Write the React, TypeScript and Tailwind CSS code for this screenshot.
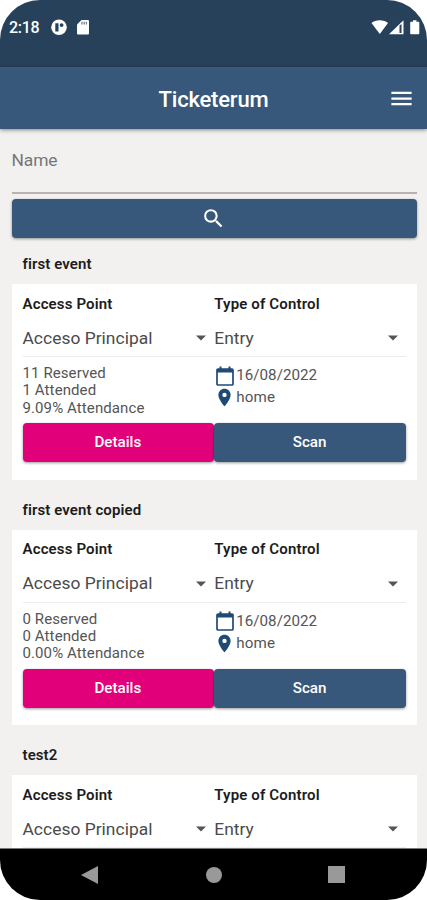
import type { ReactNode } from "react";
import { MdMenu, MdSearch, MdLocationOn } from "react-icons/md";

type EventDetails = {
  reserved: number;
  attended: number;
  attendance: string;
  date: string;
  place: string;
};

type EventItem = {
  name: string;
  details?: EventDetails;
};

const events: EventItem[] = [
  {
    name: "first event",
    details: { reserved: 11, attended: 1, attendance: "9.09", date: "16/08/2022", place: "home" },
  },
  {
    name: "first event copied",
    details: { reserved: 0, attended: 0, attendance: "0.00", date: "16/08/2022", place: "home" },
  },
  { name: "test2" },
];

const StatusBar = () => (
  <div className="flex h-[67px] shrink-0 items-start bg-[#28415a] pt-[17px] pr-[7px] pl-[9px] text-white">
    <span className="text-[16px] leading-[22px] font-medium tracking-[-0.3px]">2:18</span>
    <svg className="mt-[2px] ml-[12px]" width="16" height="17" viewBox="0 0 16 17">
      <circle cx="8" cy="8.300" r="7.800" fill="#fff" />
      <path d="M4.300 4.200h3.200v8.300H4.300z" fill="#28415a" />
      <circle cx="10.600" cy="6.100" r="1.900" fill="#28415a" />
    </svg>
    <svg className="mt-[3px] ml-[10px]" width="12" height="15" viewBox="0 0 12 15">
      <path d="M4.500 0H11a1 1 0 0 1 1 1V13.500a1 1 0 0 1-1 1H1a1 1 0 0 1-1-1V4.500z" fill="#fff" />
      <path d="M5 1.800v2.600M7.200 1.800v2.600M9.400 1.800v2.600" stroke="#6f8191" strokeWidth="1.300" />
    </svg>
    <svg className="mt-[2px] ml-auto" width="50" height="17" viewBox="0 0 50 17">
      <path d="M1.500 4C5.500.2 14 .2 18 4L9.800 15z" fill="#fff" />
      <path d="M19 15.300L33.500 1.200v14.100z" fill="#fff" />
      <path d="M29.500 6.500v7.500h2V5z" fill="#28415a" />
      <path d="M41 2.800h2V1.200h3.500v1.600h2q.8 0 .8.800v10.900q0 .8-.8.800H41q-.8 0-.8-.8V3.600q0-.8.8-.8z" fill="#fff" />
    </svg>
  </div>
);

const Header = () => (
  <header className="flex h-[62px] shrink-0 items-center bg-[#37587b] px-[12px] text-white shadow-[0_1px_4px_rgba(0,0,0,0.45)]">
    <div className="w-[27px]" />
    <h1 className="flex-1 pt-[2px] text-center text-[22px] font-medium tracking-[-0.2px]">Ticketerum</h1>
    <MdMenu className="mt-px size-[27px]" />
  </header>
);

const Select = ({ label, value }: { label: string; value: string }) => (
  <div className="flex-1">
    <div className="h-[37px] pt-[9.500px] text-[15px] leading-[20px] font-semibold tracking-[0.15px] text-[#1c1c1c]">
      {label}
    </div>
    <div className="flex h-[36px] items-center justify-between border-b border-[#ececec] pr-[8px] pb-px">
      <span className="text-[17.4px] tracking-[0.030px] text-[#4a4a4a]">{value}</span>
      <svg width="10" height="6" viewBox="0 0 10 6">
        <path d="M0 .5h10L5 5.500z" fill="#555" />
      </svg>
    </div>
  </div>
);

const Button = ({ className, children }: { className: string; children: ReactNode }) => (
  <button
    className={`flex h-[39px] flex-1 items-center justify-center rounded-[4px] pr-px text-[15.2px] font-medium text-white shadow-[0_1px_3px_rgba(0,0,0,0.4)] ${className}`}
  >
    {children}
  </button>
);

const Details = ({ details }: { details: EventDetails }) => (
  <>
    <div className="flex h-[66px] text-[15px] tracking-[0.1px] text-[#555]">
      <div className="flex-1 pt-[8px] leading-[17.400px]">
        <div>{details.reserved} Reserved</div>
        <div>{details.attended} Attended</div>
        <div>{details.attendance}% Attendance</div>
      </div>
      <div className="flex-1 pt-[7.500px] text-[15.200px]">
        <div className="flex h-[22px] items-center gap-[2px] pl-[2px]">
          <svg width="18" height="20" viewBox="0 0 18 20">
            <path d="M2 3h14a1 1 0 0 1 1 1v14a1 1 0 0 1-1 1H2a1 1 0 0 1-1-1V4a1 1 0 0 1 1-1z" fill="none" stroke="#1f4a75" strokeWidth="1.700" />
            <path d="M1 3h16v3.500H1zM3.500.5h2V4h-2zM12.500.5h2V4h-2z" fill="#1f4a75" />
          </svg>
          <span className="tracking-[0]">{details.date}</span>
        </div>
        <div className="flex h-[22px] items-center">
          <MdLocationOn className="size-[21px] text-[#1f4a75]" />
          <span className="ml-px">{details.place}</span>
        </div>
      </div>
    </div>
    <div className="flex">
      <Button className="bg-[#e2007a]">Details</Button>
      <Button className="bg-[#37587b]">Scan</Button>
    </div>
  </>
);

const EventCard = ({ event }: { event: EventItem }) => (
  <section className="h-[245.500px] shrink-0">
    <h2 className="h-[45px] pt-[15px] pl-[11px] text-[15px] leading-[20px] font-semibold tracking-[0.1px] text-[#1c1c1c]">
      {event.name}
    </h2>
    <div className="h-[195.500px] bg-white px-[11px]">
      <div className="flex">
        <Select label="Access Point" value="Acceso Principal" />
        <Select label="Type of Control" value="Entry" />
      </div>
      {event.details && <Details details={event.details} />}
    </div>
  </section>
);

const NavigationBar = () => (
  <nav className="flex h-[52px] shrink-0 items-center justify-between border-t border-[#777] bg-black pr-[82px] pl-[81px]">
    <svg width="18" height="20" viewBox="0 0 18 20">
      <path d="M17 1v18L0 10z" fill="#999" />
    </svg>
    <div className="size-[16px] rounded-full bg-[#999]" />
    <div className="size-[17px] bg-[#999]" />
  </nav>
);

export default function App() {
  return (
    <div className="h-[900px] w-[427px] bg-white">
      <div className="flex h-full flex-col overflow-hidden rounded-[40px] bg-[#f2f1f0] font-[Roboto,sans-serif]">
        <StatusBar />
        <Header />
        <main className="flex min-h-0 flex-1 flex-col overflow-hidden pr-[10px] pl-[11.500px]">
          <div className="flex h-[65px] shrink-0 items-start border-b-2 border-[#b9b2b0] pt-[19px] text-[17.4px] leading-[24px] tracking-[-0.1px] text-[#777]">
            Name
          </div>
          <div className="mt-[5px] flex h-[39px] shrink-0">
            <Button className="bg-[#37587b]">
              <MdSearch className="size-[25px]" />
            </Button>
          </div>
          <div className="mt-[1px] flex flex-col">
            {events.map((event) => (
              <EventCard key={event.name} event={event} />
            ))}
          </div>
        </main>
        <NavigationBar />
      </div>
    </div>
  );
}
